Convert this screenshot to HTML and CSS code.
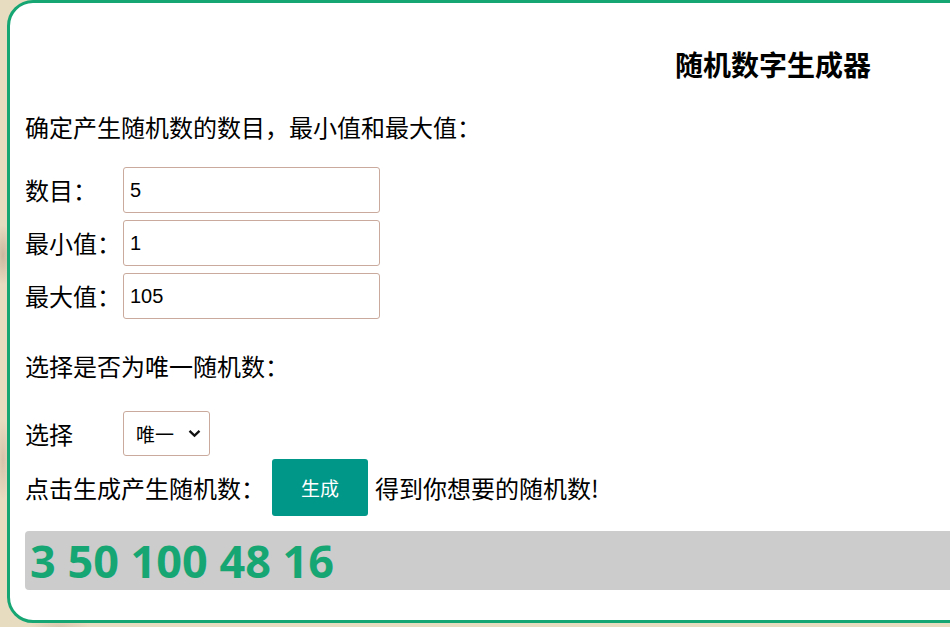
FILE: index.html
```html
<!DOCTYPE html>
<html lang="zh-CN">
<head>
    <meta charset="UTF-8">
    <meta name="viewport" content="width=device-width, initial-scale=1.0">
    <title>随机数字生成器</title>
    <link rel="stylesheet" href="styles.css">
</head>
<body>
    <div class="generator">
        <h2 class="title">随机数字生成器</h2>
        <p class="hint hint-top">确定产生随机数的数目，最小值和最大值：</p>

        <div class="fields">
            <div class="field">
                <label for="count">数目：</label>
                <input type="number" id="count" value="5">
            </div>
            <div class="field">
                <label for="min">最小值：</label>
                <input type="number" id="min" value="1">
            </div>
            <div class="field">
                <label for="max">最大值：</label>
                <input type="number" id="max" value="105">
            </div>
        </div>

        <p class="hint hint-mode">选择是否为唯一随机数：</p>

        <div class="field mode">
            <label for="unique">选择</label>
            <span class="select-wrap">
                <select id="unique">
                    <option value="1">唯一</option>
                    <option value="0">可重复</option>
                </select>
                <svg class="chevron" width="13" height="9" viewBox="0 0 13 9"><path d="M1.5 1.8 6.5 6.6l5-4.8" fill="none" stroke="#111" stroke-width="2.3"/></svg>
            </span>
        </div>

        <div class="action">
            <span>点击生成产生随机数：</span>
            <button id="generate-btn">生成</button>
            <span>得到你想要的随机数!</span>
        </div>

        <div class="result" id="result">3 50 100 48 16</div>
    </div>

    <script>
        document.getElementById("generate-btn").addEventListener("click", function() {
            const count = parseInt(document.getElementById("count").value, 10);
            const min = parseInt(document.getElementById("min").value, 10);
            const max = parseInt(document.getElementById("max").value, 10);
            const unique = document.getElementById("unique").value === "1";
            const result = document.getElementById("result");

            if (isNaN(count) || isNaN(min) || isNaN(max) || min > max) {
                result.textContent = "请输入有效的数字";
                return;
            }
            if (unique && count > max - min + 1) {
                result.textContent = "范围太小，无法生成唯一随机数";
                return;
            }

            const numbers = [];
            while (numbers.length < count) {
                const n = Math.floor(Math.random() * (max - min + 1)) + min;
                if (unique && numbers.includes(n)) continue;
                numbers.push(n);
            }
            result.textContent = numbers.join(" ");
        });
    </script>
</body>
</html>
```

FILE: styles.css
```css
body {
    margin: 0;
    height: 627px;
    overflow: hidden;
    font-family: "Noto Sans CJK SC", "Noto Sans", sans-serif;
    color: #000;
    background-color: #e7dbc0;
    background-image:
        radial-gradient(ellipse 10px 30px at 3px 255px, rgba(170, 140, 120, 0.45), transparent),
        radial-gradient(ellipse 8px 40px at 3px 460px, rgba(170, 140, 120, 0.3), transparent),
        radial-gradient(ellipse 30px 10px at 60px 627px, rgba(170, 140, 120, 0.25), transparent);
}
.generator {
    width: 1532px;
    height: 623px;
    box-sizing: border-box;
    margin-left: 7px;
    padding: 0 15px 30px;
    background: #fff;
    border: 3px solid #16a673;
    border-radius: 26px;
}
.title {
    margin: 44px 0 0;
    font-size: 28px;
    line-height: 34px;
    font-weight: bold;
    text-align: center;
}
.hint {
    margin: 0;
    font-size: 24px;
    line-height: 30px;
}
.hint-top {
    margin-top: 31px;
}
.hint-mode {
    margin-top: 32px;
}
.fields {
    margin-top: 25px;
    display: flex;
    flex-direction: column;
    gap: 7px;
}
.field {
    display: flex;
    align-items: center;
}
.field label {
    width: 98px;
    font-size: 24px;
    line-height: 30px;
}
.field input {
    width: 257px;
    height: 46px;
    box-sizing: border-box;
    padding: 0 6px;
    border: 1px solid #c9aa9c;
    border-radius: 3px;
    font-family: "Liberation Sans", Arial, sans-serif;
    font-size: 20px;
    color: #000;
    appearance: textfield;
}
.mode {
    margin-top: 30px;
}
.select-wrap {
    position: relative;
    display: inline-block;
}
.select-wrap select {
    width: 87px;
    height: 45px;
    padding: 0 0 0 12px;
    border: 1px solid #c9aa9c;
    border-radius: 3px;
    background: #fff;
    font-family: "Noto Sans CJK SC", sans-serif;
    font-size: 19px;
    color: #000;
    appearance: none;
}
.chevron {
    position: absolute;
    right: 9px;
    top: 18px;
    pointer-events: none;
}
.action {
    margin-top: 3px;
    display: flex;
    align-items: center;
    font-size: 24px;
    line-height: 30px;
}
.action button {
    width: 96px;
    height: 57px;
    margin: 0 7px;
    border: none;
    border-radius: 3px;
    background-color: #009688;
    color: #fff;
    font-family: "Noto Sans CJK SC", sans-serif;
    font-size: 19px;
    cursor: pointer;
}
.result {
    margin-top: 15px;
    height: 59px;
    padding-left: 5px;
    background: #cccccc;
    border-radius: 4px;
    font-family: "Open Sans", sans-serif;
    font-size: 45px;
    font-weight: bold;
    line-height: 59px;
    color: #16a673;
}
```
